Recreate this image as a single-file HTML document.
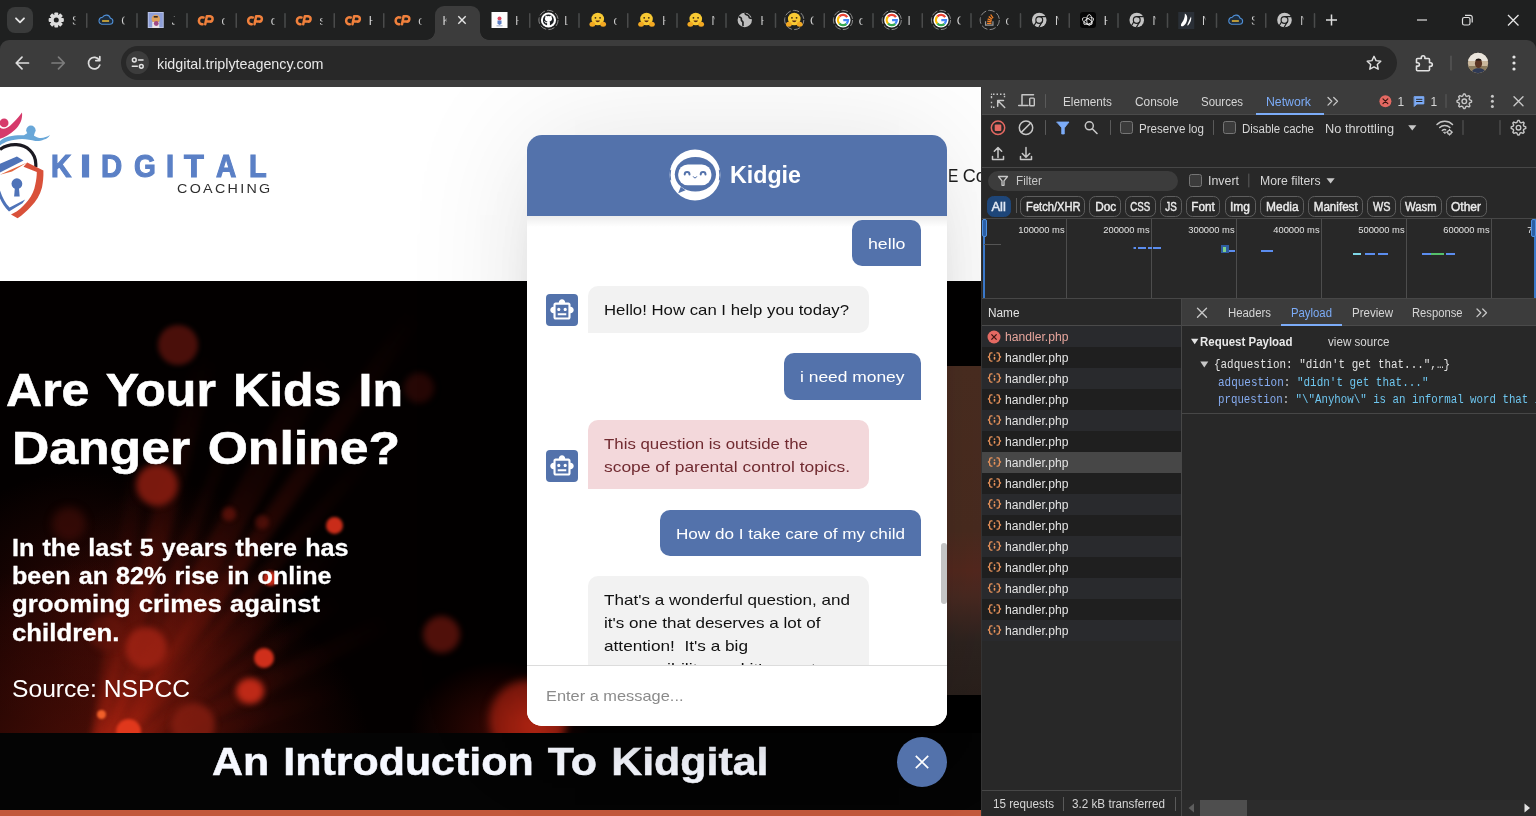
<!DOCTYPE html>
<html lang="en">
<head>
<meta charset="utf-8">
<title>kidgital.triplyteagency.com</title>
<style>
*{box-sizing:border-box;margin:0;padding:0}
html,body{width:1536px;height:816px;overflow:hidden;background:#1f2020;font-family:"Liberation Sans",sans-serif;}
.abs{position:absolute}
#root{position:relative;width:1536px;height:816px;overflow:hidden;background:#1f2020;opacity:.999}
/* ---------- browser chrome ---------- */
#tabstrip{left:0;top:0;width:1536px;height:40px;background:#1f2020}
#toolbar{left:0;top:40px;width:1536px;height:47px;background:#3c3c3c;border-radius:9px 9px 0 0}
#omni{left:121px;top:46px;width:1276px;height:34px;border-radius:17px;background:#282828}
#omni .chip{left:5.250px;top:5.250px;width:23px;height:23px;border-radius:12px;background:#3c3c3c}
#omni .url{left:36px;top:.5px;height:34px;line-height:34px;font-size:14.400px;color:#e8e8e8;white-space:nowrap;transform-origin:0 50%}
.tabsearch{left:7px;top:7px;width:26px;height:26px;border-radius:8px;background:#3a3b3b}
.tlet{top:13px;height:16px;line-height:16px;font-size:12px;color:#d8d8d8;width:3.800px;overflow:hidden;white-space:nowrap;-webkit-mask-image:linear-gradient(90deg,#000 35%,rgba(0,0,0,.15) 100%);mask-image:linear-gradient(90deg,#000 35%,rgba(0,0,0,.15) 100%)}
#acttab{left:435px;top:6px;width:45px;height:34px;background:#3c3c3c;border-radius:9px 9px 0 0}
#acttab:before,#acttab:after{content:"";position:absolute;bottom:0;width:9px;height:9px}
#acttab:before{left:-9px;background:radial-gradient(circle at 0 0,rgba(60,60,60,0) 8.5px,#3c3c3c 9.2px)}
#acttab:after{right:-9px;background:radial-gradient(circle at 100% 0,rgba(60,60,60,0) 8.5px,#3c3c3c 9.2px)}
/* ---------- page ---------- */
#page{left:0;top:87px;width:981px;height:729px;background:#fff;overflow:hidden}
#hdr{left:0;top:0;width:981px;height:194px;background:#fff}
#hero{left:0;top:194px;width:981px;height:452px;background:#050000;overflow:hidden}
#intro{left:0;top:646px;width:981px;height:77px;background:#040404}
#ostrip{left:0;top:723px;width:981px;height:6px;background:#c2583c}
.mont{font-family:"Liberation Sans",sans-serif;font-weight:700;color:#fff;white-space:nowrap;transform-origin:0 0}
.bk{border-radius:50%}
.wml{position:absolute;top:-.8px;-webkit-text-stroke:1.1px #5b80c6;font-size:31.100px;line-height:36px;font-weight:700;color:#5b80c6;transform-origin:0 0;white-space:nowrap}
/* ---------- chat ---------- */
#chat{left:526.600px;top:47.500px;width:420px;height:591.500px;border-radius:15px;background:#fff;overflow:hidden}
#chatshadow{left:526.600px;top:47.500px;width:420px;height:591.500px;border-radius:15px;box-shadow:0 0 128px 0 rgba(0,0,0,.1),0 32px 64px -48px rgba(0,0,0,.5)}
#chead{left:0;top:0;width:420px;height:81.700px;background:#5372ab}
.bub{font-size:15px;line-height:22.800px;padding:12px 16px;white-space:nowrap;overflow:hidden;font-family:"Liberation Sans",sans-serif}
.bub span{position:relative;top:1.100px;display:inline-block;transform-origin:0 50%;white-space:nowrap}
.out{background:#5372ab;color:#fff;border-radius:10px 10px 0 10px}
.in{background:#f2f2f2;color:#111;border-radius:10px 10px 10px 0}
.err{background:#f3d8db;color:#712b31;border-radius:10px 10px 10px 0}
.bot{width:32px;height:32px;border-radius:4px;background:#5372ab}
/* ---------- devtools ---------- */
#dt{left:982px;top:87px;width:554px;height:729px;background:#282828;color:#e3e3e3;font-size:12px;overflow:hidden;white-space:nowrap}
#dtsep{left:981px;top:87px;width:1px;height:729px;background:#333}
#dt .t{position:absolute;height:16px;line-height:16px;font-size:12px;color:#e3e3e3;white-space:nowrap}
#dt .vs{position:absolute;width:1px;background:#5a5a5a}
#dt .cb{position:absolute;width:13px;height:13px;border:1px solid #757575;border-radius:2.5px;background:#3b3b3b}
#dt .chipb{position:absolute;top:108px;height:21px;border:1px solid #5e5e5e;border-radius:6.5px;font-size:12px;line-height:20.500px;text-align:center;color:#ececec;font-weight:400;-webkit-text-stroke:.4px #ececec}
#dt .row{position:absolute;left:0;width:199px;height:21px}
#dt .row .t{left:23px;top:2.5px}
#dt .mono{font-family:"Liberation Mono",monospace;font-size:12px}
</style>
</head>
<body>
<div id="root">
<div id="tabstrip" class="abs"></div>
<div id="toolbar" class="abs"></div>
<div id="acttab" class="abs"></div>
<div class="abs tabsearch"></div>

<svg class="abs" style="left:0;top:0" width="1536" height="40" viewBox="0 0 1536 40">
<g transform="translate(56.25,20)"><g fill="#dcdcdc"><rect x="-1.9" y="-7.6" width="3.8" height="15.2" rx="0.8" transform="rotate(0)"/><rect x="-1.9" y="-7.6" width="3.8" height="15.2" rx="0.8" transform="rotate(45)"/><rect x="-1.9" y="-7.6" width="3.8" height="15.2" rx="0.8" transform="rotate(90)"/><rect x="-1.9" y="-7.6" width="3.8" height="15.2" rx="0.8" transform="rotate(135)"/><circle r="5.6"/></g><circle r="2.5" fill="#1f2020"/></g>
<g transform="translate(97.5,12)"><path d="M4.2 12.2h8.2a3 3 0 0 0 .5-5.95A4.3 4.3 0 0 0 5 5.3 3.5 3.5 0 0 0 4.2 12.2z" fill="#1d2c3c" stroke="#4f8fd6" stroke-width="1.1"/><rect x="4.6" y="8.2" width="7" height="1.6" fill="#e0b43a"/></g>
<g transform="translate(147.75,12)"><rect width="16" height="16" fill="#b9c3e6"/><rect x="1" y="1" width="14" height="14" fill="#8e9fd8"/><circle cx="8" cy="7" r="4.2" fill="#e1a25c"/><rect x="4.5" y="10" width="7" height="6" fill="#e9e3e8"/><circle cx="8.5" cy="11.5" r="2.4" fill="#a04a86"/><rect x="6" y="4" width="4" height="1.6" fill="#3a2a20"/></g>
<g transform="translate(197.55,12)" fill="none" stroke="#f0803c" stroke-width="2.5" stroke-linecap="round" stroke-linejoin="round"><path d="M6 5.400H5.200a3.400 3.400 0 0 0-.9 6.800H5"/><path d="M7.700 12.200 9.300 4.200h3.300a2.700 2.700 0 0 1-.5 5.400H9.900"/></g>
<g transform="translate(246.8,12)" fill="none" stroke="#f0803c" stroke-width="2.5" stroke-linecap="round" stroke-linejoin="round"><path d="M6 5.400H5.200a3.400 3.400 0 0 0-.9 6.800H5"/><path d="M7.700 12.200 9.300 4.200h3.300a2.700 2.700 0 0 1-.5 5.400H9.900"/></g>
<g transform="translate(295.55,12)" fill="none" stroke="#f0803c" stroke-width="2.5" stroke-linecap="round" stroke-linejoin="round"><path d="M6 5.400H5.200a3.400 3.400 0 0 0-.9 6.800H5"/><path d="M7.700 12.200 9.300 4.200h3.300a2.700 2.700 0 0 1-.5 5.400H9.900"/></g>
<g transform="translate(344.8,12)" fill="none" stroke="#f0803c" stroke-width="2.5" stroke-linecap="round" stroke-linejoin="round"><path d="M6 5.400H5.200a3.400 3.400 0 0 0-.9 6.800H5"/><path d="M7.700 12.200 9.300 4.200h3.300a2.700 2.700 0 0 1-.5 5.400H9.900"/></g>
<g transform="translate(394.3,12)" fill="none" stroke="#f0803c" stroke-width="2.5" stroke-linecap="round" stroke-linejoin="round"><path d="M6 5.400H5.200a3.400 3.400 0 0 0-.9 6.800H5"/><path d="M7.700 12.200 9.300 4.200h3.300a2.700 2.700 0 0 1-.5 5.400H9.900"/></g>
<g transform="translate(491.5,12)"><rect width="16" height="16" fill="#fdfdfd"/><circle cx="8" cy="6.5" r="2" fill="#d9485f"/><path d="M6 8.5h4v3.2l-2 1.3-2-1.3z" fill="#5b7fc4"/><rect x="5" y="13.4" width="6" height="0.9" fill="#9aa6c4"/></g>
<circle cx="548.5" cy="20" r="9.6" fill="none" stroke="#8a8a8a" stroke-width="1" stroke-dasharray="6.5 2.2"/><circle cx="548.5" cy="20" r="7.6" fill="#fff"/><g transform="translate(548.5,20)"><path d="M0-5.6a5.6 5.6 0 0 0-1.8 10.9c.3 0 .4-.1.4-.3v-1.9c-1.6.3-2-.7-2-.7-.3-.7-.7-.9-.7-.9-.5-.4 0-.4 0-.4.6 0 .9.6.9.6.5.9 1.400 .7 1.800 .5 0-.4.2-.7.4-.8-1.300 -.1-2.600 -.6-2.600 -2.800 0-.6.2-1.100 .6-1.500-.1-.1-.3-.7 0-1.500 0 0 .5-.2 1.600 .6a5.400 5.400 0 0 1 2.800 0c1.100-.8 1.600-.6 1.600-.6.3.8.1 1.400 0 1.500.4.400 .6.900 .6 1.500 0 2.200-1.300 2.700-2.600 2.800.2.200 .4.500 .4 1v2.500c0 .2.1.3.4.3A5.600 5.600 0 0 0 0-5.600z" fill="#1b1f23"/></g>
<g transform="translate(597.75,20)"><circle cx="0" cy="-1" r="6.3" fill="#f8c933"/><ellipse cx="-5.400" cy="4.2" rx="2.9" ry="2.500" fill="#f2a822"/><ellipse cx="5.400" cy="4.2" rx="2.9" ry="2.500" fill="#f2a822"/><circle cx="-2.300" cy="-2.200" r=".9" fill="#3a2b12"/><circle cx="2.300" cy="-2.200" r=".9" fill="#3a2b12"/><path d="M-2.300 .6a2.400 2.400 0 0 0 4.600 0z" fill="#5a2c16"/></g>
<g transform="translate(646.5,20)"><circle cx="0" cy="-1" r="6.3" fill="#f8c933"/><ellipse cx="-5.400" cy="4.2" rx="2.9" ry="2.500" fill="#f2a822"/><ellipse cx="5.400" cy="4.2" rx="2.9" ry="2.500" fill="#f2a822"/><circle cx="-2.300" cy="-2.200" r=".9" fill="#3a2b12"/><circle cx="2.300" cy="-2.200" r=".9" fill="#3a2b12"/><path d="M-2.300 .6a2.400 2.400 0 0 0 4.600 0z" fill="#5a2c16"/></g>
<g transform="translate(695.75,20)"><circle cx="0" cy="-1" r="6.3" fill="#f8c933"/><ellipse cx="-5.400" cy="4.2" rx="2.9" ry="2.500" fill="#f2a822"/><ellipse cx="5.400" cy="4.2" rx="2.9" ry="2.500" fill="#f2a822"/><circle cx="-2.300" cy="-2.200" r=".9" fill="#3a2b12"/><circle cx="2.300" cy="-2.200" r=".9" fill="#3a2b12"/><path d="M-2.300 .6a2.400 2.400 0 0 0 4.600 0z" fill="#5a2c16"/></g>
<g transform="translate(744.75,20)"><circle r="7.2" fill="#bdbdbd"/><path d="M-6-3.200c2 .2 3 1.400 2.600 2.800-.4 1.300 1.200 1.200 1.600 2.600.3 1.200-.6 2.600.4 3.800M0.500-7c-.5 1.600 1.600 1.800 2.900 2.400 1.400.700 .400 2.100 1.700 2.600 1 .4 1.700.2 2 .8" fill="none" stroke="#1f2020" stroke-width="1.700"/></g>
<circle cx="794.25" cy="20" r="9.6" fill="none" stroke="#8a8a8a" stroke-width="1" stroke-dasharray="6.5 2.2"/><g transform="translate(794.25,20)"><circle cx="0" cy="-1" r="6.3" fill="#f8c933"/><ellipse cx="-5.400" cy="4.2" rx="2.9" ry="2.500" fill="#f2a822"/><ellipse cx="5.400" cy="4.2" rx="2.9" ry="2.500" fill="#f2a822"/><circle cx="-2.300" cy="-2.200" r=".9" fill="#3a2b12"/><circle cx="2.300" cy="-2.200" r=".9" fill="#3a2b12"/><path d="M-2.300 .6a2.400 2.400 0 0 0 4.600 0z" fill="#5a2c16"/></g>
<circle cx="843.0" cy="20" r="9.6" fill="none" stroke="#8a8a8a" stroke-width="1" stroke-dasharray="6.5 2.2"/><circle cx="843.0" cy="20" r="7.6" fill="#fff"/><g transform="translate(843.0,20)" fill="none" stroke-width="2.300"><path d="M4.200-2.900A5 5 0 0 0-3.700-3.400" stroke="#ea4335"/><path d="M-3.700-3.400a5 5 0 0 0 0 6.800" stroke="#fbbc05"/><path d="M-3.700 3.400a5 5 0 0 0 7.200.400" stroke="#34a853"/><path d="M3.500 3.800A5 5 0 0 0 5 .1H.300" stroke="#4285f4"/></g>
<circle cx="891.75" cy="20" r="9.6" fill="none" stroke="#8a8a8a" stroke-width="1" stroke-dasharray="6.5 2.2"/><circle cx="891.75" cy="20" r="7.6" fill="#fff"/><g transform="translate(891.75,20)" fill="none" stroke-width="2.300"><path d="M4.200-2.900A5 5 0 0 0-3.700-3.400" stroke="#ea4335"/><path d="M-3.700-3.400a5 5 0 0 0 0 6.800" stroke="#fbbc05"/><path d="M-3.700 3.400a5 5 0 0 0 7.200.400" stroke="#34a853"/><path d="M3.500 3.800A5 5 0 0 0 5 .1H.300" stroke="#4285f4"/></g>
<circle cx="941.0" cy="20" r="9.6" fill="none" stroke="#8a8a8a" stroke-width="1" stroke-dasharray="6.5 2.2"/><circle cx="941.0" cy="20" r="7.6" fill="#fff"/><g transform="translate(941.0,20)" fill="none" stroke-width="2.300"><path d="M4.200-2.900A5 5 0 0 0-3.700-3.400" stroke="#ea4335"/><path d="M-3.700-3.400a5 5 0 0 0 0 6.800" stroke="#fbbc05"/><path d="M-3.700 3.400a5 5 0 0 0 7.200.400" stroke="#34a853"/><path d="M3.500 3.800A5 5 0 0 0 5 .1H.300" stroke="#4285f4"/></g>
<circle cx="989.75" cy="20" r="9.6" fill="none" stroke="#8a8a8a" stroke-width="1" stroke-dasharray="6.5 2.2"/><g transform="translate(989.75,20)"><path d="M-4.200 1.200v4h7.400v-4" fill="none" stroke="#9a9a9a" stroke-width="1.200"/><g stroke="#f48024" stroke-width="1.300"><path d="M-2.700 3.400h4.400"/><path d="M-2.600 1.200l4.300.700"/><path d="M-2.100-1.200l4 1.800"/><path d="M-1-3.600l3.300 2.900"/><path d="M.9-5.500l2.400 3.700"/></g></g>
<g transform="translate(1039.25,20)"><circle r="7.300" fill="#c4c4c4"/><circle r="3.400" fill="#c4c4c4" stroke="#1f2020" stroke-width="1.200"/><path d="M0-3.400h7M-2.900 1.700l-3.500 6M2.900 1.700l-3.300 5.700" stroke="#1f2020" stroke-width="1.200" fill="none"/></g>
<rect x="1080.0" y="12" width="16" height="16" rx="3" fill="#050505"/><g transform="translate(1088.0,20)" fill="none" stroke="#f2f2f2" stroke-width=".9"><ellipse rx="2.600" ry="5.400" transform="rotate(0) translate(1.300 0)"/><ellipse rx="2.600" ry="5.400" transform="rotate(60) translate(1.300 0)"/><ellipse rx="2.600" ry="5.400" transform="rotate(120) translate(1.300 0)"/></g>
<g transform="translate(1136.75,20)"><circle r="7.300" fill="#c4c4c4"/><circle r="3.400" fill="#c4c4c4" stroke="#1f2020" stroke-width="1.200"/><path d="M0-3.400h7M-2.900 1.700l-3.500 6M2.900 1.700l-3.300 5.700" stroke="#1f2020" stroke-width="1.200" fill="none"/></g>
<rect x="1178.25" y="12" width="16" height="17" fill="#2a2f36"/><g transform="translate(1186.25,20)" fill="#fff"><path d="M-1.400-6.500c2.600 1.400 3.300 5.600 1.200 9.400-1 1.800-3.200 3.900-4.600 3.400-1-.4-.4-2.300.6-3.700 1.700-2.500 3-5.300 2.800-9.100z"/><path d="M4.800-3.600c.8 2.600-.5 6.200-2.800 8.800-.500 .600-1.200.200-.9-.500 1.300-3 2.300-5.700 3.700-8.300z"/></g>
<g transform="translate(1227.25,12)"><path d="M4.2 12.2h8.2a3 3 0 0 0 .5-5.95A4.3 4.3 0 0 0 5 5.3 3.5 3.5 0 0 0 4.2 12.2z" fill="#1d2c3c" stroke="#4f8fd6" stroke-width="1.1"/><rect x="4.6" y="8.2" width="7" height="1.6" fill="#e0b43a"/></g>
<g transform="translate(1284.5,20)"><circle r="7.300" fill="#c4c4c4"/><circle r="3.400" fill="#c4c4c4" stroke="#1f2020" stroke-width="1.200"/><path d="M0-3.400h7M-2.900 1.700l-3.500 6M2.900 1.700l-3.300 5.700" stroke="#1f2020" stroke-width="1.200" fill="none"/></g>
<rect x="86.0" y="13" width="1.500" height="15" rx=".7" fill="#4a4b4b"/>
<rect x="136.25" y="13" width="1.500" height="15" rx=".7" fill="#4a4b4b"/>
<rect x="186.25" y="13" width="1.500" height="15" rx=".7" fill="#4a4b4b"/>
<rect x="235.5" y="13" width="1.500" height="15" rx=".7" fill="#4a4b4b"/>
<rect x="284.25" y="13" width="1.500" height="15" rx=".7" fill="#4a4b4b"/>
<rect x="333.5" y="13" width="1.500" height="15" rx=".7" fill="#4a4b4b"/>
<rect x="383.0" y="13" width="1.500" height="15" rx=".7" fill="#4a4b4b"/>
<rect x="529.0" y="13" width="1.500" height="15" rx=".7" fill="#4a4b4b"/>
<rect x="578.25" y="13" width="1.500" height="15" rx=".7" fill="#4a4b4b"/>
<rect x="627.0" y="13" width="1.500" height="15" rx=".7" fill="#4a4b4b"/>
<rect x="676.25" y="13" width="1.500" height="15" rx=".7" fill="#4a4b4b"/>
<rect x="725.25" y="13" width="1.500" height="15" rx=".7" fill="#4a4b4b"/>
<rect x="774.75" y="13" width="1.500" height="15" rx=".7" fill="#4a4b4b"/>
<rect x="823.5" y="13" width="1.500" height="15" rx=".7" fill="#4a4b4b"/>
<rect x="872.25" y="13" width="1.500" height="15" rx=".7" fill="#4a4b4b"/>
<rect x="921.5" y="13" width="1.500" height="15" rx=".7" fill="#4a4b4b"/>
<rect x="970.25" y="13" width="1.500" height="15" rx=".7" fill="#4a4b4b"/>
<rect x="1019.75" y="13" width="1.500" height="15" rx=".7" fill="#4a4b4b"/>
<rect x="1068.5" y="13" width="1.500" height="15" rx=".7" fill="#4a4b4b"/>
<rect x="1117.25" y="13" width="1.500" height="15" rx=".7" fill="#4a4b4b"/>
<rect x="1166.75" y="13" width="1.500" height="15" rx=".7" fill="#4a4b4b"/>
<rect x="1215.75" y="13" width="1.500" height="15" rx=".7" fill="#4a4b4b"/>
<rect x="1265.0" y="13" width="1.500" height="15" rx=".7" fill="#4a4b4b"/>
<rect x="1313.75" y="13" width="1.500" height="15" rx=".7" fill="#4a4b4b"/>
<path d="M458.300 16.300l7.400 7.400m0-7.400l-7.400 7.400" stroke="#e6e6e6" stroke-width="1.400" fill="none"/>
<path d="M1326 20h11M1331.500 14.500v11" stroke="#dedede" stroke-width="1.500" fill="none"/>
<path d="M1417 20h10" stroke="#e0e0e0" stroke-width="1.200"/>
<rect x="1462.500" y="17.500" width="7.500" height="7.500" rx="1.800" fill="none" stroke="#e0e0e0" stroke-width="1.200"/><path d="M1465 15.300h5.200a2 2 0 0 1 2 2v5.200" fill="none" stroke="#e0e0e0" stroke-width="1.200"/>
<path d="M1508 15l10.500 10.500m0-10.500L1508 25.500" stroke="#e6e6e6" stroke-width="1.300" fill="none"/>
<path d="M16 18.300l4 4 4-4" stroke="#e6e6e6" stroke-width="1.800" fill="none" stroke-linecap="round" stroke-linejoin="round"/>
</svg>
<div class="abs tlet" style="left:72.0px">S</div>
<div class="abs tlet" style="left:121.25px">C</div>
<div class="abs tlet" style="left:171.5px">J</div>
<div class="abs tlet" style="left:221.5px">c</div>
<div class="abs tlet" style="left:270.75px">c</div>
<div class="abs tlet" style="left:319.5px">s</div>
<div class="abs tlet" style="left:368.75px">H</div>
<div class="abs tlet" style="left:418.25px">c</div>
<div class="abs tlet" style="left:442.500px;width:4px">K</div>
<div class="abs tlet" style="left:515.25px">H</div>
<div class="abs tlet" style="left:564.25px">L</div>
<div class="abs tlet" style="left:613.5px">c</div>
<div class="abs tlet" style="left:662.25px">H</div>
<div class="abs tlet" style="left:711.5px">N</div>
<div class="abs tlet" style="left:760.5px">H</div>
<div class="abs tlet" style="left:810.0px">C</div>
<div class="abs tlet" style="left:858.75px">c</div>
<div class="abs tlet" style="left:907.5px">I</div>
<div class="abs tlet" style="left:956.75px">C</div>
<div class="abs tlet" style="left:1005.5px">c</div>
<div class="abs tlet" style="left:1055.0px">N</div>
<div class="abs tlet" style="left:1103.75px">H</div>
<div class="abs tlet" style="left:1152.5px">N</div>
<div class="abs tlet" style="left:1202.0px">N</div>
<div class="abs tlet" style="left:1251.0px">S</div>
<div class="abs tlet" style="left:1300.25px">N</div>
<div id="omni" class="abs"><div class="abs chip"></div><div class="abs url" id="url" style="transform:scaleX(0.9928)">kidgital.triplyteagency.com</div></div>
<svg class="abs" style="left:0;top:40px" width="1536" height="47" viewBox="0 40 1536 47" fill="none" stroke-linecap="round" stroke-linejoin="round">
<!-- back -->
<path d="M28.500 63H16.500M22 57.200 16.200 63l5.800 5.800" stroke="#dedede" stroke-width="1.700"/>
<!-- forward -->
<path d="M52 63h12M58.500 57.200 64.300 63l-5.800 5.800" stroke="#7d7d7d" stroke-width="1.700"/>
<!-- reload -->
<path d="M99.300 60.200A5.800 5.800 0 1 0 99.800 65" stroke="#dedede" stroke-width="1.700"/>
<path d="M99.800 56.600v4h-4" stroke="#dedede" stroke-width="1.700"/>
<!-- site info (tune) -->
<g stroke="#e3e3e3" stroke-width="1.500"><circle cx="134.300" cy="60" r="1.900"/><path d="M138.500 60h4.500"/><circle cx="141.300" cy="66.300" r="1.900"/><path d="M132.300 66.300h5"/></g>
<!-- star -->
<path d="M1374 56.300l2.050 4.350 4.750.6-3.500 3.250.9 4.700-4.200-2.350-4.200 2.350.9-4.700-3.500-3.250 4.750-.6z" stroke="#e0e0e0" stroke-width="1.400"/>
<!-- extensions puzzle -->
<path d="M1417.500 58.500h3.800v-1a1.800 1.800 0 0 1 3.600 0v1h3.600a1 1 0 0 1 1 1v3.200h1a1.800 1.800 0 0 1 0 3.600h-1v3.400a1 1 0 0 1-1 1h-11a1 1 0 0 1-1-1v-3.600h1.200a1.700 1.700 0 0 0 0-3.400h-1.200v-3.200a1 1 0 0 1 1-1z" stroke="#e3e3e3" stroke-width="1.600"/>
<path d="M1451 56v14" stroke="#5c5c5c" stroke-width="1.200"/>
<!-- avatar -->
<clipPath id="avc"><circle cx="1478" cy="63" r="10.200"/></clipPath>
<g clip-path="url(#avc)" stroke="none"><rect x="1467" y="52" width="22" height="22" fill="#c9b79c"/><rect x="1467" y="52" width="22" height="9" fill="#e9e4dc"/><rect x="1467" y="66" width="22" height="8" fill="#8a7a5c"/><ellipse cx="1478.500" cy="63.500" rx="3.600" ry="4.600" fill="#5a3524"/><path d="M1471.500 74c0-4.500 3-5.800 7-5.800s7 1.300 7 5.800z" fill="#2f3a55"/><path d="M1475.200 60.500a3.500 3 0 0 1 6.600 0z" fill="#1c1410"/></g>
<!-- menu dots -->
<g fill="#e3e3e3" stroke="none"><circle cx="1514" cy="57" r="1.600"/><circle cx="1514" cy="63" r="1.600"/><circle cx="1514" cy="69" r="1.600"/></g>
</svg>

<div id="page" class="abs">
  <div id="hdr" class="abs">
    <!-- logo icon (clipped at left edge) -->
    <svg class="abs" style="left:0;top:20px" width="56" height="120" viewBox="0 107 56 120">
      <path d="M0 127.500C3 130 7 128.500 10.300 125.600 13.500 122.500 18 118 22 112.400 22.800 119 20 125 14.700 130 10 134.500 4.500 137.500 0 138.800z" fill="#d63a6b"/>
      <circle cx="4.100" cy="122.900" r="4.400" fill="#d63a6b"/>
      <path d="M0 141C3 138.500 6 137.300 8.800 136.600 14 135.300 19 135 24 135.300L27.500 133h7l-.5 2.800C36 136.800 38 137.800 39.700 138 43.500 138.300 47 137 50 135.100 48.500 137.500 46.500 139 44 139.600 41 141 38 141.300 35.300 141 31 140.200 27 139.200 22 139.100 17 139.300 12.500 140 8.800 141 5.500 142 2.500 143.500 0 145.500z" fill="#69a7d8"/>
      <circle cx="30.900" cy="130.300" r="4.700" fill="#69a7d8"/>
      <path d="M0 149.600C4 146.300 10 144.400 16.500 144.700 27 145.200 35.600 153 35.800 164V167.200" fill="none" stroke="#1b1a22" stroke-width="3.200"/>
      <path d="M0 163.800 16.900 156.500 23.500 160.600 0 172.500z" fill="#4f73b8"/>
      <path d="M0 174.800 9 170.500 27.200 162.400 12 171.500z" fill="#e2673f"/>
      <path d="M27.200 162.400 43.400 170.400C43.600 177 43 182 42 187.400 40 195 36 201.500 31 206.500 27 211 22.500 215 17.600 218.200L11 214.600 17 211.200C21.500 208 25 204.500 28 200.600 32 195.500 34.300 190 35.300 184.400 36.300 180 36.800 176 36.800 172L23.500 166.800z" fill="#d9513a"/>
      <path d="M0 190.500C2.500 198 5.500 203.500 9.600 207.500L25.200 199.600 22.500 203.300 9 211.400C4.500 207 2 203 0 198.500z" fill="#4f73b8"/>
      <circle cx="16.900" cy="183.700" r="5.400" fill="#4f73b8"/><path d="M15 186.500h3.800l.9 10h-5.600z" fill="#4f73b8"/>
    </svg>
    <!-- wordmark -->
    <div class="abs" id="wm" style="left:0;top:62.500px;width:300px;height:36px"><span class="wml" id="wmK" style="left:50.55px;transform:scaleX(0.9066)">K</span><span class="wml" id="wmI1" style="left:80.22px;transform:scaleX(1.282)">I</span><span class="wml" id="wmD" style="left:101.45px;transform:scaleX(0.9439)">D</span><span class="wml" id="wmG" style="left:134.11px;transform:scaleX(0.9014)">G</span><span class="wml" id="wmI2" style="left:165.88px;transform:scaleX(0.9391)">I</span><span class="wml" id="wmT" style="left:184.46px;transform:scaleX(1.0439)">T</span><span class="wml" id="wmA" style="left:216.27px;transform:scaleX(0.9033)">A</span><span class="wml" id="wmL" style="left:249.02px;transform:scaleX(0.9303)">L</span></div>
    <div class="abs" id="coach" style="left:177.300px;top:94.200px;height:16px;line-height:16px;font-size:13.700px;color:#2e2e2e;letter-spacing:2.200px;white-space:nowrap;transform-origin:0 50%;transform:scaleX(1.0451)">COACHING</div>
    <div class="abs" style="left:948.200px;top:77.700px;font-size:18px;line-height:22px;color:#1e1e1e;white-space:nowrap;word-spacing:-2.500px"><span style="display:inline-block;transform-origin:0 50%;transform:scaleX(.86)">E</span> Co</div>
  </div>
  <div id="hero" class="abs">
    <div id="bokeh" class="abs" style="left:0;top:0;width:981px;height:452px;background:
radial-gradient(ellipse 270px 190px at 100px 470px,rgba(120,22,10,.62),rgba(95,16,8,.36) 55%,rgba(0,0,0,0) 100%),
radial-gradient(ellipse 120px 150px at 170px 350px,rgba(100,18,9,.4),rgba(0,0,0,0) 100%),
radial-gradient(ellipse 150px 130px at 80px 320px,rgba(85,14,8,.45),rgba(0,0,0,0) 100%),
radial-gradient(ellipse 90px 70px at 500px 450px,rgba(120,20,10,.45),rgba(0,0,0,0) 100%),
#030000">
<div class="abs" style="left:87.0px;top:160px;width:16px;height:330px;transform:rotate(8deg);transform-origin:50% 100%;background:linear-gradient(0deg,rgba(170,34,16,0.53),rgba(140,26,12,0.38) 35%,rgba(90,14,7,0.19) 70%,rgba(40,5,2,0));filter:blur(3.5px)"></div>
<div class="abs" style="left:84.0px;top:60px;width:22px;height:430px;transform:rotate(15deg);transform-origin:50% 100%;background:linear-gradient(0deg,rgba(170,34,16,0.57),rgba(140,26,12,0.42) 35%,rgba(90,14,7,0.21) 70%,rgba(40,5,2,0));filter:blur(3.5px)"></div>
<div class="abs" style="left:89.0px;top:110px;width:12px;height:380px;transform:rotate(22deg);transform-origin:50% 100%;background:linear-gradient(0deg,rgba(170,34,16,0.5),rgba(140,26,12,0.35) 35%,rgba(90,14,7,0.17) 70%,rgba(40,5,2,0));filter:blur(3.5px)"></div>
<div class="abs" style="left:82.0px;top:20px;width:26px;height:470px;transform:rotate(29deg);transform-origin:50% 100%;background:linear-gradient(0deg,rgba(170,34,16,0.55),rgba(140,26,12,0.4) 35%,rgba(90,14,7,0.20) 70%,rgba(40,5,2,0));filter:blur(3.5px)"></div>
<div class="abs" style="left:86.0px;top:-70px;width:18px;height:560px;transform:rotate(35deg);transform-origin:50% 100%;background:linear-gradient(0deg,rgba(170,34,16,0.53),rgba(140,26,12,0.38) 35%,rgba(90,14,7,0.19) 70%,rgba(40,5,2,0));filter:blur(3.5px)"></div>
<div class="abs" style="left:88.0px;top:70px;width:14px;height:420px;transform:rotate(41deg);transform-origin:50% 100%;background:linear-gradient(0deg,rgba(170,34,16,0.49),rgba(140,26,12,0.34) 35%,rgba(90,14,7,0.17) 70%,rgba(40,5,2,0));filter:blur(3.5px)"></div>
<div class="abs" style="left:84.0px;top:160px;width:22px;height:330px;transform:rotate(47deg);transform-origin:50% 100%;background:linear-gradient(0deg,rgba(170,34,16,0.51),rgba(140,26,12,0.36) 35%,rgba(90,14,7,0.18) 70%,rgba(40,5,2,0));filter:blur(3.5px)"></div>
<div class="abs" style="left:88.0px;top:190px;width:14px;height:300px;transform:rotate(55deg);transform-origin:50% 100%;background:linear-gradient(0deg,rgba(170,34,16,0.44999999999999996),rgba(140,26,12,0.3) 35%,rgba(90,14,7,0.15) 70%,rgba(40,5,2,0));filter:blur(3.5px)"></div>
<div class="abs" style="left:86.0px;top:160px;width:18px;height:330px;transform:rotate(63deg);transform-origin:50% 100%;background:linear-gradient(0deg,rgba(170,34,16,0.41000000000000003),rgba(140,26,12,0.26) 35%,rgba(90,14,7,0.13) 70%,rgba(40,5,2,0));filter:blur(3.5px)"></div>
<div class="abs" style="left:87.0px;top:230px;width:16px;height:260px;transform:rotate(72deg);transform-origin:50% 100%;background:linear-gradient(0deg,rgba(170,34,16,0.37),rgba(140,26,12,0.22) 35%,rgba(90,14,7,0.11) 70%,rgba(40,5,2,0));filter:blur(3.5px)"></div>
<div class="abs bk" style="left:158px;top:44px;width:40px;height:40px;background:rgba(82,17,11,.9);filter:blur(2.5px)"></div>
<div class="abs bk" style="left:404px;top:92px;width:30px;height:30px;background:rgba(48,9,6,.8);filter:blur(3px)"></div>
<div class="abs bk" style="left:136px;top:183px;width:42px;height:42px;background:rgba(135,28,16,.9);filter:blur(3px)"></div>
<div class="abs bk" style="left:326px;top:236px;width:17px;height:17px;background:#c92c19;filter:blur(1.5px)"></div>
<div class="abs bk" style="left:263px;top:290px;width:15px;height:15px;background:#c42a18;filter:blur(1.5px)"></div>
<div class="abs bk" style="left:423px;top:335px;width:37px;height:37px;background:rgba(95,20,13,.85);filter:blur(3px)"></div>
<div class="abs bk" style="left:254px;top:367px;width:20px;height:20px;background:#cf2f1b;filter:blur(1.5px)"></div>
<div class="abs bk" style="left:236px;top:397px;width:28px;height:26px;background:#be2917;filter:blur(3px)"></div>
<div class="abs bk" style="left:97px;top:429px;width:9px;height:9px;background:#f0602a;filter:blur(1px)"></div>
<div class="abs bk" style="left:116px;top:438px;width:25px;height:25px;background:#e0381c;filter:blur(1.500px)"></div>
<div class="abs bk" style="left:171px;top:422px;width:44px;height:44px;background:rgba(140,32,18,.72);filter:blur(3px)"></div>
<div class="abs bk" style="left:489px;top:399px;width:78px;height:78px;background:radial-gradient(circle at 60% 60%,rgba(200,42,22,.9),rgba(150,30,16,.8) 70%,rgba(120,24,12,.7));filter:blur(4px)"></div>
<div class="abs bk" style="left:125px;top:346px;width:42px;height:42px;background:rgba(165,36,20,.78);filter:blur(3px)"></div>
<div class="abs bk" style="left:52px;top:226px;width:34px;height:34px;background:rgba(100,20,12,.4);filter:blur(4px)"></div>
<div class="abs bk" style="left:222px;top:226px;width:14px;height:14px;background:rgba(120,24,14,.6);filter:blur(2px)"></div>
<div class="abs bk" style="left:255px;top:234px;width:14px;height:14px;background:rgba(120,24,14,.5);filter:blur(2px)"></div>
<div class="abs bk" style="left:89px;top:334px;width:36px;height:36px;background:rgba(105,21,12,.6);filter:blur(3px)"></div>
</div>
    <div class="abs" style="left:946px;top:85px;width:35px;height:329px;background:linear-gradient(180deg,#4b2e22 0%,#4a2c20 50%,#55291f 62%,#4a2a22 70%,#2e2420 84%,#2a201c 100%)"></div>
    <div class="abs" style="left:946px;top:414px;width:35px;height:38px;background:#000"></div>
    <div class="abs mont" id="h1a" style="word-spacing:3px;-webkit-text-stroke:.6px #fff;left:6px;top:80.300px;font-size:47px;transform:scaleX(1.0647);line-height:57.500px">Are Your Kids In</div>
    <div class="abs mont" id="h1b" style="word-spacing:3px;-webkit-text-stroke:.6px #fff;left:12px;top:137.600px;font-size:47px;transform:scaleX(1.0993);line-height:57.500px">Danger Online?</div>
    <div class="abs mont" id="s1" style="word-spacing:1px;-webkit-text-stroke:.3px #fff;left:12px;top:253px;font-size:23.5px;transform:scaleX(1.0708);line-height:28.200px">In the last 5 years there has</div>
    <div class="abs mont" id="s2" style="word-spacing:1px;-webkit-text-stroke:.3px #fff;left:12px;top:281.200px;font-size:23.5px;transform:scaleX(1.0691);line-height:28.200px">been an 82% rise in online</div>
    <div class="abs mont" id="s3" style="word-spacing:1px;-webkit-text-stroke:.3px #fff;left:12px;top:309.400px;font-size:23.5px;transform:scaleX(1.0943);line-height:28.200px">grooming crimes against</div>
    <div class="abs mont" id="s4" style="word-spacing:1px;-webkit-text-stroke:.3px #fff;left:12px;top:337.600px;font-size:23.5px;transform:scaleX(1.0976);line-height:28.200px">children.</div>
    <div class="abs mont" id="src" style="left:12px;top:394px;font-size:23.5px;transform:scaleX(1.0484);line-height:28px;font-weight:400">Source: NSPCC</div>
  </div>
  <div id="intro" class="abs">
    <div class="abs mont" id="introt" style="word-spacing:2px;-webkit-text-stroke:.5px #f6f8ff;left:212px;top:6px;font-size:39px;transform:scaleX(1.1005);line-height:46px;color:#f6f8ff">An Introduction To Kidgital</div>
  </div>
  <div id="ostrip" class="abs"></div>
</div>

<div class="abs" style="left:0;top:87px;width:981px;height:729px;overflow:hidden;pointer-events:none">
<div id="chatshadow" class="abs"></div>
<div id="chat" class="abs">
  <div id="chead" class="abs">
    <svg class="abs" style="left:139.700px;top:11.500px" width="58" height="58" viewBox="-29 -29 58 58">
      <circle cx="0" cy="0" r="25.400" fill="#fff"/>
      <path d="M-24.300-5.200a24.800 24.800 0 0 0 0 10.600M24.300-5.200a24.800 24.800 0 0 1 0 10.600" stroke="#5372ab" stroke-width="1" fill="none"/>
      <ellipse cx="0.400" cy="-.7" rx="20.600" ry="17.300" fill="#5372ab"/>
      <path d="M-14.200 11.800l-2.600 6.400 7.400-3z" fill="#5372ab"/>
      <rect x="-16.800" y="-10.500" width="33.200" height="20.800" rx="9.600" fill="#fff"/>
      <path d="M-10.300-.6a2.400 2.400 0 0 1 4.800 0M5.700-.6a2.400 2.400 0 0 1 4.800 0" stroke="#5372ab" stroke-width="2" fill="none" stroke-linecap="round"/>
      <path d="M-1.700 1.700a1.800 1.800 0 0 0 3.400 0" stroke="#5372ab" stroke-width="1" fill="none" stroke-linecap="round"/>
    </svg>
    <div class="abs" id="kidgie" style="left:203.800px;top:26.700px;height:28px;line-height:28px;font-size:23.300px;font-weight:700;color:#fff;white-space:nowrap;transform-origin:0 50%;transform:scaleX(0.9974)">Kidgie</div>
  </div>
  <!-- subtle header shadow -->
  <div class="abs" style="left:0;top:81.700px;width:420px;height:11px;background:linear-gradient(180deg,rgba(0,0,0,.075),rgba(0,0,0,0))"></div>

  <div class="abs bub out" style="left:325px;top:85px;width:69px;height:46.800px"><span id="c1" style="transform:scaleX(1.1828)">hello</span></div>

  <div class="abs bot" style="left:19.200px;top:159.100px"><svg width="32" height="32" viewBox="-3 -3 30 30"><path fill="#fff" d="M20 9V7c0-1.100-.9-2-2-2h-3c0-1.660-1.340-3-3-3S9 3.340 9 5H6c-1.100 0-2 .9-2 2v2c-1.660 0-3 1.340-3 3s1.340 3 3 3v4c0 1.100.9 2 2 2h12c1.100 0 2-.9 2-2v-4c1.660 0 3-1.340 3-3s-1.340-3-3-3zm-2 10H6V7h12v12zm-9-6c-.830 0-1.500-.670-1.500-1.500S8.170 10 9 10s1.500.670 1.500 1.500S9.830 13 9 13zm7.500-1.500c0 .830-.670 1.500-1.500 1.500s-1.500-.670-1.500-1.500.670-1.500 1.500-1.500 1.500.670 1.500 1.500zM8 15h8v2H8v-2z"/></svg></div>
  <div class="abs bub in" style="left:61.500px;top:151.600px;width:280.500px;height:46.800px"><span id="c2" style="transform:scaleX(1.1172)">Hello! How can I help you today?</span></div>

  <div class="abs bub out" style="left:257.700px;top:218.400px;width:136.300px;height:46.800px"><span id="c3" style="transform:scaleX(1.1603)">i need money</span></div>

  <div class="abs bot" style="left:19.200px;top:315.700px"><svg width="32" height="32" viewBox="-3 -3 30 30"><path fill="#fff" d="M20 9V7c0-1.100-.9-2-2-2h-3c0-1.660-1.340-3-3-3S9 3.340 9 5H6c-1.100 0-2 .9-2 2v2c-1.660 0-3 1.340-3 3s1.340 3 3 3v4c0 1.100.9 2 2 2h12c1.100 0 2-.9 2-2v-4c1.660 0 3-1.340 3-3s-1.340-3-3-3zm-2 10H6V7h12v12zm-9-6c-.830 0-1.500-.670-1.500-1.500S8.170 10 9 10s1.500.670 1.500 1.500S9.830 13 9 13zm7.500-1.500c0 .830-.670 1.500-1.500 1.500s-1.500-.670-1.500-1.500.670-1.500 1.500-1.500 1.500.670 1.500 1.500zM8 15h8v2H8v-2z"/></svg></div>
  <div class="abs bub err" style="left:61.500px;top:285.200px;width:280.500px;height:69.600px"><span id="c4" style="transform:scaleX(1.1222)">This question is outside the</span><br><span id="c5" style="transform:scaleX(1.1615)">scope of parental control topics.</span></div>

  <div class="abs bub out" style="left:133.300px;top:375px;width:260.700px;height:46.800px"><span id="c6" style="transform:scaleX(1.1397)">How do I take care of my child</span></div>

  <div class="abs bub in" style="left:61.500px;top:441.800px;width:280.500px;height:140px"><span id="c7" style="transform:scaleX(1.1371)">That's a wonderful question, and</span><br><span id="c8" style="transform:scaleX(1.1366)">it's one that deserves a lot of</span><br><span id="c9" style="transform:scaleX(1.1478)">attention!&nbsp; It's a big</span><br><span id="c10" style="transform:scaleX(1.1821)">responsibility, and it's great</span></div>

  <!-- scrollbar -->
  <div class="abs" style="left:414px;top:408.500px;width:6px;height:60.500px;background:#c4c4c4;border-radius:25px"></div>
  <!-- input -->
  <div class="abs" style="left:0;top:530.300px;width:420px;height:61.500px;background:#fff;border-top:1px solid #dcdcdc"></div>
  <div class="abs" id="ph" style="left:19.500px;top:549.300px;height:23px;line-height:23px;font-size:15px;color:#8b8b8b;white-space:nowrap;transform-origin:0 50%;transform:scaleX(1.0921)">Enter a message...</div>
</div>
<!-- toggler -->
<div class="abs" style="left:896.500px;top:649.500px;width:50px;height:50px;border-radius:50%;background:#5372ab"></div>
<svg class="abs" style="left:909.500px;top:662.500px" width="24" height="24" viewBox="0 0 24 24"><path d="M5.800 5.800 18.200 18.200M18.200 5.800 5.800 18.200" stroke="#fff" stroke-width="1.700" fill="none"/></svg>
</div>

<div id="dtsep" class="abs"></div>
<div id="dt" class="abs">
<div class="abs" style="left:0;top:0;width:554px;height:27px;background:#3c3c3c"></div>
<div class="abs" style="left:0;top:27px;width:554px;height:1px;background:#4a4a4a"></div>
<div class="t" id="d_el" style="left:80.5px;top:6.7px;color:#d6d6d6;transform-origin:0 50%;transform:scaleX(0.9794);">Elements</div>
<div class="t" id="d_co" style="left:153px;top:6.7px;color:#d6d6d6;transform-origin:0 50%;transform:scaleX(0.9879);">Console</div>
<div class="t" id="d_so" style="left:218.5px;top:6.7px;color:#d6d6d6;transform-origin:0 50%;transform:scaleX(0.9539);">Sources</div>
<div class="t" id="d_ne" style="left:284px;top:6.7px;color:#7cacf8;transform-origin:0 50%;transform:scaleX(1.0224);">Network</div>
<div class="abs" style="left:274px;top:26px;width:68px;height:2px;background:#7cacf8"></div>
<div class="t" id="d_e1" style="left:415.5px;top:7.2px;color:#d6d6d6;transform-origin:0 50%;transform:scaleX(1);">1</div>
<div class="t" id="d_m1" style="left:448.5px;top:7.2px;color:#d6d6d6;transform-origin:0 50%;transform:scaleX(1);">1</div>
<div class="t" id="d_pl" style="left:156.5px;top:33.6px;color:#d6d6d6;transform-origin:0 50%;transform:scaleX(0.9647);">Preserve log</div>
<div class="t" id="d_dc" style="left:259.5px;top:33.6px;color:#d6d6d6;transform-origin:0 50%;transform:scaleX(0.9552);">Disable cache</div>
<div class="t" id="d_nt" style="left:342.5px;top:33.6px;color:#d6d6d6;transform-origin:0 50%;transform:scaleX(1.0664);">No throttling</div>
<div class="abs" style="left:0;top:80px;width:554px;height:1px;background:#474747"></div>
<div class="abs" style="left:5.5px;top:84px;width:190px;height:20px;border-radius:10px;background:#3c3c3c"></div>
<div class="t" id="d_fi" style="left:33.5px;top:86.4px;color:#c7c7c7;transform-origin:0 50%;transform:scaleX(0.9748);">Filter</div>
<div class="t" id="d_in" style="left:225.5px;top:86.4px;color:#d6d6d6;transform-origin:0 50%;transform:scaleX(1.0328);">Invert</div>
<div class="t" id="d_mf" style="left:277.6px;top:86.4px;color:#d6d6d6;transform-origin:0 50%;transform:scaleX(1.0195);">More filters</div>
<div class="cb" style="left:137.5px;top:34.1px"></div>
<div class="cb" style="left:241.0px;top:34.1px"></div>
<div class="cb" style="left:207.0px;top:87.0px"></div>
<div class="chipb" style="left:4.6px;width:24.4px;top:108.5px;background:#1e4679;border-color:#1e4679;color:#d7e6ff;"><span id="ch0" style="display:inline-block;transform:scaleX(1.0867)">All</span></div>
<div class="chipb" style="left:38.3px;width:65.1px;top:108.5px;"><span id="ch1" style="display:inline-block;transform:scaleX(0.9286)">Fetch/XHR</span></div>
<div class="chipb" style="left:107.4px;width:31.6px;top:108.5px;"><span id="ch2" style="display:inline-block;transform:scaleX(0.9839)">Doc</span></div>
<div class="chipb" style="left:143px;width:30.5px;top:108.5px;"><span id="ch3" style="display:inline-block;transform:scaleX(0.8101)">CSS</span></div>
<div class="chipb" style="left:178px;width:22px;top:108.5px;"><span id="ch4" style="display:inline-block;transform:scaleX(0.8205)">JS</span></div>
<div class="chipb" style="left:204px;width:34px;top:108.5px;"><span id="ch5" style="display:inline-block;transform:scaleX(0.9785)">Font</span></div>
<div class="chipb" style="left:242.8px;width:31.2px;top:108.5px;"><span id="ch6" style="display:inline-block;transform:scaleX(0.9992)">Img</span></div>
<div class="chipb" style="left:278px;width:43.8px;top:108.5px;"><span id="ch7" style="display:inline-block;transform:scaleX(0.9943)">Media</span></div>
<div class="chipb" style="left:326px;width:55px;top:108.5px;"><span id="ch8" style="display:inline-block;transform:scaleX(0.97)">Manifest</span></div>
<div class="chipb" style="left:385.2px;width:28.6px;top:108.5px;"><span id="ch9" style="display:inline-block;transform:scaleX(0.9047)">WS</span></div>
<div class="chipb" style="left:418px;width:42.3px;top:108.5px;"><span id="ch10" style="display:inline-block;transform:scaleX(0.9385)">Wasm</span></div>
<div class="chipb" style="left:464px;width:41px;top:108.5px;"><span id="ch11" style="display:inline-block;transform:scaleX(0.9995)">Other</span></div>
<div class="vs" style="left:33.5px;top:111px;height:15px"></div>
<div class="abs" style="left:0;top:130.5px;width:554px;height:1px;background:#474747"></div>
<div class="vs" style="left:84.0px;top:131.5px;height:80px;background:#4d4d4d"></div>
<div class="t" style="left:20.6px;width:62px;text-align:right;top:134.8px;font-size:9.400px;color:#e3e3e3">100000 ms</div>
<div class="vs" style="left:169.0px;top:131.5px;height:80px;background:#4d4d4d"></div>
<div class="t" style="left:105.6px;width:62px;text-align:right;top:134.8px;font-size:9.400px;color:#e3e3e3">200000 ms</div>
<div class="vs" style="left:254.0px;top:131.5px;height:80px;background:#4d4d4d"></div>
<div class="t" style="left:190.6px;width:62px;text-align:right;top:134.8px;font-size:9.400px;color:#e3e3e3">300000 ms</div>
<div class="vs" style="left:339.0px;top:131.5px;height:80px;background:#4d4d4d"></div>
<div class="t" style="left:275.6px;width:62px;text-align:right;top:134.8px;font-size:9.400px;color:#e3e3e3">400000 ms</div>
<div class="vs" style="left:424.0px;top:131.5px;height:80px;background:#4d4d4d"></div>
<div class="t" style="left:360.6px;width:62px;text-align:right;top:134.8px;font-size:9.400px;color:#e3e3e3">500000 ms</div>
<div class="vs" style="left:509.0px;top:131.5px;height:80px;background:#4d4d4d"></div>
<div class="t" style="left:445.6px;width:62px;text-align:right;top:134.8px;font-size:9.400px;color:#e3e3e3">600000 ms</div>
<div class="t" style="left:545.2px;top:134.8px;font-size:9.400px">7</div>
<div class="abs" style="left:1px;top:131.5px;width:1.5px;height:80px;background:#3a78c9"></div>
<div class="abs" style="left:0px;top:132px;width:5px;height:18px;border-radius:2px;background:#2b5fa5;border:1px solid #4d8fe0"></div>
<div class="abs" style="left:552px;top:131.5px;width:2px;height:80px;background:#3a78c9"></div>
<div class="abs" style="left:549.3px;top:132px;width:5px;height:18px;border-radius:2px;background:#2b5fa5;border:1px solid #4d8fe0"></div>
<div class="abs" style="left:2px;top:157px;width:16.5px;height:1px;background:#555"></div>
<div class="abs" style="left:152px;top:159.7px;width:2px;height:2px;background:#5b8def"></div>
<div class="abs" style="left:156px;top:159.7px;width:8px;height:2px;background:#5b8def"></div>
<div class="abs" style="left:166px;top:159.7px;width:4px;height:2px;background:#5b8def"></div>
<div class="abs" style="left:171px;top:159.7px;width:8px;height:2px;background:#5b8def"></div>
<div class="abs" style="left:150.5px;top:159.7px;width:1.5px;height:2px;background:#3d5a8a"></div>
<div class="abs" style="left:239px;top:158px;width:7.7px;height:8px;background:#2f5da0"></div>
<div class="abs" style="left:241px;top:159.5px;width:3px;height:5px;background:#7fd08a"></div>
<div class="abs" style="left:246.7px;top:162.5px;width:6.3px;height:2px;background:#5b8def"></div>
<div class="abs" style="left:278.5px;top:162.7px;width:12.0px;height:2px;background:#5b8def"></div>
<div class="abs" style="left:370.8px;top:165.7px;width:8.2px;height:2px;background:#7fd8e8"></div>
<div class="abs" style="left:383px;top:165.7px;width:9.6px;height:2px;background:#5b8def"></div>
<div class="abs" style="left:396px;top:165.7px;width:9.6px;height:2px;background:#5b8def"></div>
<div class="abs" style="left:439.5px;top:165.7px;width:9.5px;height:2px;background:#5b8def"></div>
<div class="abs" style="left:449px;top:165.7px;width:13px;height:2px;background:#55c06a"></div>
<div class="abs" style="left:464px;top:165.7px;width:9px;height:2px;background:#5b8def"></div>
<div class="abs" style="left:0;top:211px;width:554px;height:1px;background:#474747"></div>
<div class="t" id="d_na" style="left:5.5px;top:217.8px;color:#e3e3e3;transform-origin:0 50%;transform:scaleX(0.9839);">Name</div>
<div class="abs" style="left:0;top:238px;width:199px;height:1px;background:#4a4a4a"></div>
<div class="row" style="top:239px;background:#292a2d"><svg class="abs" style="left:5px;top:3.500px" width="14" height="14" viewBox="-7 -7 14 14"><circle r="6.500" fill="#e46962"/><path d="M-2.600-2.600 2.600 2.600M2.600-2.600-2.600 2.600" stroke="#3a1512" stroke-width="1.300"/></svg><div class="t" id="r0" style="color:#e6a59c;transform-origin:0 50%;transform:scaleX(1.0122)">handler.php</div></div>
<div class="row" style="top:260px;background:#1f1f1f"><svg class="abs" style="left:4.500px;top:3px" width="15" height="14" viewBox="-8 -7.500 16 15" fill="none" stroke="#e9935a" stroke-width="1.550" stroke-linecap="round" stroke-linejoin="round"><g transform="scale(.95,.82)"><path d="M-2.800-5.300h-1a1.600 1.600 0 0 0-1.600 1.600v1.500c0 1.100-.7 1.700-1.500 2.200.8.500 1.500 1.100 1.500 2.200v1.500a1.600 1.600 0 0 0 1.600 1.600h1"/><path d="M2.800-5.300h1a1.600 1.600 0 0 1 1.600 1.600v1.500c0 1.100.7 1.700 1.500 2.200-.8.500-1.500 1.100-1.500 2.200v1.500a1.600 1.600 0 0 1-1.600 1.600h-1"/><path d="M0-2.600v.2M0 .5v2.200" stroke-width="1.900"/></g></svg><div class="t" id="r1" style="color:#e3e3e3;transform-origin:0 50%;transform:scaleX(1.0122)">handler.php</div></div>
<div class="row" style="top:281px;background:#292a2d"><svg class="abs" style="left:4.500px;top:3px" width="15" height="14" viewBox="-8 -7.500 16 15" fill="none" stroke="#e9935a" stroke-width="1.550" stroke-linecap="round" stroke-linejoin="round"><g transform="scale(.95,.82)"><path d="M-2.800-5.300h-1a1.600 1.600 0 0 0-1.600 1.600v1.500c0 1.100-.7 1.700-1.500 2.200.8.500 1.500 1.100 1.500 2.200v1.500a1.600 1.600 0 0 0 1.600 1.600h1"/><path d="M2.800-5.300h1a1.600 1.600 0 0 1 1.600 1.600v1.500c0 1.100.7 1.700 1.500 2.200-.8.500-1.500 1.100-1.500 2.200v1.500a1.600 1.600 0 0 1-1.600 1.600h-1"/><path d="M0-2.600v.2M0 .5v2.200" stroke-width="1.900"/></g></svg><div class="t" id="r2" style="color:#e3e3e3;transform-origin:0 50%;transform:scaleX(1.0122)">handler.php</div></div>
<div class="row" style="top:302px;background:#1f1f1f"><svg class="abs" style="left:4.500px;top:3px" width="15" height="14" viewBox="-8 -7.500 16 15" fill="none" stroke="#e9935a" stroke-width="1.550" stroke-linecap="round" stroke-linejoin="round"><g transform="scale(.95,.82)"><path d="M-2.800-5.300h-1a1.600 1.600 0 0 0-1.600 1.600v1.500c0 1.100-.7 1.700-1.500 2.200.8.500 1.500 1.100 1.500 2.200v1.500a1.600 1.600 0 0 0 1.600 1.600h1"/><path d="M2.800-5.300h1a1.600 1.600 0 0 1 1.600 1.600v1.500c0 1.100.7 1.700 1.500 2.200-.8.500-1.500 1.100-1.500 2.200v1.500a1.600 1.600 0 0 1-1.600 1.600h-1"/><path d="M0-2.600v.2M0 .5v2.200" stroke-width="1.900"/></g></svg><div class="t" id="r3" style="color:#e3e3e3;transform-origin:0 50%;transform:scaleX(1.0122)">handler.php</div></div>
<div class="row" style="top:323px;background:#292a2d"><svg class="abs" style="left:4.500px;top:3px" width="15" height="14" viewBox="-8 -7.500 16 15" fill="none" stroke="#e9935a" stroke-width="1.550" stroke-linecap="round" stroke-linejoin="round"><g transform="scale(.95,.82)"><path d="M-2.800-5.300h-1a1.600 1.600 0 0 0-1.600 1.600v1.500c0 1.100-.7 1.700-1.500 2.200.8.500 1.500 1.100 1.500 2.200v1.500a1.600 1.600 0 0 0 1.600 1.600h1"/><path d="M2.800-5.300h1a1.600 1.600 0 0 1 1.600 1.600v1.500c0 1.100.7 1.700 1.500 2.200-.8.500-1.500 1.100-1.500 2.200v1.500a1.600 1.600 0 0 1-1.600 1.600h-1"/><path d="M0-2.600v.2M0 .5v2.200" stroke-width="1.900"/></g></svg><div class="t" id="r4" style="color:#e3e3e3;transform-origin:0 50%;transform:scaleX(1.0122)">handler.php</div></div>
<div class="row" style="top:344px;background:#1f1f1f"><svg class="abs" style="left:4.500px;top:3px" width="15" height="14" viewBox="-8 -7.500 16 15" fill="none" stroke="#e9935a" stroke-width="1.550" stroke-linecap="round" stroke-linejoin="round"><g transform="scale(.95,.82)"><path d="M-2.800-5.300h-1a1.600 1.600 0 0 0-1.600 1.600v1.500c0 1.100-.7 1.700-1.500 2.200.8.500 1.500 1.100 1.500 2.200v1.500a1.600 1.600 0 0 0 1.600 1.600h1"/><path d="M2.800-5.300h1a1.600 1.600 0 0 1 1.600 1.600v1.500c0 1.100.7 1.700 1.500 2.200-.8.500-1.500 1.100-1.500 2.200v1.500a1.600 1.600 0 0 1-1.600 1.600h-1"/><path d="M0-2.600v.2M0 .5v2.200" stroke-width="1.900"/></g></svg><div class="t" id="r5" style="color:#e3e3e3;transform-origin:0 50%;transform:scaleX(1.0122)">handler.php</div></div>
<div class="row" style="top:365px;background:#474747"><svg class="abs" style="left:4.500px;top:3px" width="15" height="14" viewBox="-8 -7.500 16 15" fill="none" stroke="#e9935a" stroke-width="1.550" stroke-linecap="round" stroke-linejoin="round"><g transform="scale(.95,.82)"><path d="M-2.800-5.300h-1a1.600 1.600 0 0 0-1.600 1.600v1.500c0 1.100-.7 1.700-1.500 2.200.8.500 1.500 1.100 1.500 2.200v1.500a1.600 1.600 0 0 0 1.600 1.600h1"/><path d="M2.800-5.300h1a1.600 1.600 0 0 1 1.600 1.600v1.500c0 1.100.7 1.700 1.500 2.200-.8.500-1.500 1.100-1.500 2.200v1.500a1.600 1.600 0 0 1-1.600 1.600h-1"/><path d="M0-2.600v.2M0 .5v2.200" stroke-width="1.900"/></g></svg><div class="t" id="r6" style="color:#e3e3e3;transform-origin:0 50%;transform:scaleX(1.0122)">handler.php</div></div>
<div class="row" style="top:386px;background:#1f1f1f"><svg class="abs" style="left:4.500px;top:3px" width="15" height="14" viewBox="-8 -7.500 16 15" fill="none" stroke="#e9935a" stroke-width="1.550" stroke-linecap="round" stroke-linejoin="round"><g transform="scale(.95,.82)"><path d="M-2.800-5.300h-1a1.600 1.600 0 0 0-1.600 1.600v1.500c0 1.100-.7 1.700-1.500 2.200.8.500 1.500 1.100 1.500 2.200v1.500a1.600 1.600 0 0 0 1.600 1.600h1"/><path d="M2.800-5.300h1a1.600 1.600 0 0 1 1.600 1.600v1.500c0 1.100.7 1.700 1.500 2.200-.8.500-1.500 1.100-1.500 2.200v1.500a1.600 1.600 0 0 1-1.600 1.600h-1"/><path d="M0-2.600v.2M0 .5v2.200" stroke-width="1.900"/></g></svg><div class="t" id="r7" style="color:#e3e3e3;transform-origin:0 50%;transform:scaleX(1.0122)">handler.php</div></div>
<div class="row" style="top:407px;background:#292a2d"><svg class="abs" style="left:4.500px;top:3px" width="15" height="14" viewBox="-8 -7.500 16 15" fill="none" stroke="#e9935a" stroke-width="1.550" stroke-linecap="round" stroke-linejoin="round"><g transform="scale(.95,.82)"><path d="M-2.800-5.300h-1a1.600 1.600 0 0 0-1.600 1.600v1.500c0 1.100-.7 1.700-1.500 2.200.8.500 1.500 1.100 1.500 2.200v1.500a1.600 1.600 0 0 0 1.600 1.600h1"/><path d="M2.800-5.300h1a1.600 1.600 0 0 1 1.600 1.600v1.500c0 1.100.7 1.700 1.500 2.200-.8.500-1.500 1.100-1.500 2.200v1.500a1.600 1.600 0 0 1-1.600 1.600h-1"/><path d="M0-2.600v.2M0 .5v2.200" stroke-width="1.900"/></g></svg><div class="t" id="r8" style="color:#e3e3e3;transform-origin:0 50%;transform:scaleX(1.0122)">handler.php</div></div>
<div class="row" style="top:428px;background:#1f1f1f"><svg class="abs" style="left:4.500px;top:3px" width="15" height="14" viewBox="-8 -7.500 16 15" fill="none" stroke="#e9935a" stroke-width="1.550" stroke-linecap="round" stroke-linejoin="round"><g transform="scale(.95,.82)"><path d="M-2.800-5.300h-1a1.600 1.600 0 0 0-1.600 1.600v1.500c0 1.100-.7 1.700-1.500 2.200.8.500 1.500 1.100 1.500 2.200v1.500a1.600 1.600 0 0 0 1.600 1.600h1"/><path d="M2.800-5.300h1a1.600 1.600 0 0 1 1.600 1.600v1.500c0 1.100.7 1.700 1.500 2.200-.8.500-1.500 1.100-1.500 2.200v1.500a1.600 1.600 0 0 1-1.600 1.600h-1"/><path d="M0-2.600v.2M0 .5v2.200" stroke-width="1.900"/></g></svg><div class="t" id="r9" style="color:#e3e3e3;transform-origin:0 50%;transform:scaleX(1.0122)">handler.php</div></div>
<div class="row" style="top:449px;background:#292a2d"><svg class="abs" style="left:4.500px;top:3px" width="15" height="14" viewBox="-8 -7.500 16 15" fill="none" stroke="#e9935a" stroke-width="1.550" stroke-linecap="round" stroke-linejoin="round"><g transform="scale(.95,.82)"><path d="M-2.800-5.300h-1a1.600 1.600 0 0 0-1.600 1.600v1.500c0 1.100-.7 1.700-1.500 2.200.8.500 1.500 1.100 1.500 2.200v1.500a1.600 1.600 0 0 0 1.600 1.600h1"/><path d="M2.800-5.300h1a1.600 1.600 0 0 1 1.600 1.600v1.500c0 1.100.7 1.700 1.500 2.200-.8.500-1.500 1.100-1.500 2.200v1.500a1.600 1.600 0 0 1-1.600 1.600h-1"/><path d="M0-2.600v.2M0 .5v2.200" stroke-width="1.900"/></g></svg><div class="t" id="r10" style="color:#e3e3e3;transform-origin:0 50%;transform:scaleX(1.0122)">handler.php</div></div>
<div class="row" style="top:470px;background:#1f1f1f"><svg class="abs" style="left:4.500px;top:3px" width="15" height="14" viewBox="-8 -7.500 16 15" fill="none" stroke="#e9935a" stroke-width="1.550" stroke-linecap="round" stroke-linejoin="round"><g transform="scale(.95,.82)"><path d="M-2.800-5.300h-1a1.600 1.600 0 0 0-1.600 1.600v1.500c0 1.100-.7 1.700-1.500 2.200.8.500 1.500 1.100 1.500 2.200v1.500a1.600 1.600 0 0 0 1.600 1.600h1"/><path d="M2.800-5.300h1a1.600 1.600 0 0 1 1.600 1.600v1.500c0 1.100.7 1.700 1.500 2.200-.8.500-1.500 1.100-1.500 2.200v1.500a1.600 1.600 0 0 1-1.600 1.600h-1"/><path d="M0-2.600v.2M0 .5v2.200" stroke-width="1.900"/></g></svg><div class="t" id="r11" style="color:#e3e3e3;transform-origin:0 50%;transform:scaleX(1.0122)">handler.php</div></div>
<div class="row" style="top:491px;background:#292a2d"><svg class="abs" style="left:4.500px;top:3px" width="15" height="14" viewBox="-8 -7.500 16 15" fill="none" stroke="#e9935a" stroke-width="1.550" stroke-linecap="round" stroke-linejoin="round"><g transform="scale(.95,.82)"><path d="M-2.800-5.300h-1a1.600 1.600 0 0 0-1.600 1.600v1.500c0 1.100-.7 1.700-1.500 2.200.8.500 1.500 1.100 1.500 2.200v1.500a1.600 1.600 0 0 0 1.600 1.600h1"/><path d="M2.800-5.300h1a1.600 1.600 0 0 1 1.600 1.600v1.500c0 1.100.7 1.700 1.500 2.200-.8.500-1.500 1.100-1.500 2.200v1.500a1.600 1.600 0 0 1-1.600 1.600h-1"/><path d="M0-2.600v.2M0 .5v2.200" stroke-width="1.900"/></g></svg><div class="t" id="r12" style="color:#e3e3e3;transform-origin:0 50%;transform:scaleX(1.0122)">handler.php</div></div>
<div class="row" style="top:512px;background:#1f1f1f"><svg class="abs" style="left:4.500px;top:3px" width="15" height="14" viewBox="-8 -7.500 16 15" fill="none" stroke="#e9935a" stroke-width="1.550" stroke-linecap="round" stroke-linejoin="round"><g transform="scale(.95,.82)"><path d="M-2.800-5.300h-1a1.600 1.600 0 0 0-1.600 1.600v1.500c0 1.100-.7 1.700-1.500 2.200.8.500 1.500 1.100 1.500 2.200v1.500a1.600 1.600 0 0 0 1.600 1.600h1"/><path d="M2.800-5.300h1a1.600 1.600 0 0 1 1.600 1.600v1.500c0 1.100.7 1.700 1.500 2.200-.8.500-1.500 1.100-1.500 2.200v1.500a1.600 1.600 0 0 1-1.600 1.600h-1"/><path d="M0-2.600v.2M0 .5v2.200" stroke-width="1.900"/></g></svg><div class="t" id="r13" style="color:#e3e3e3;transform-origin:0 50%;transform:scaleX(1.0122)">handler.php</div></div>
<div class="row" style="top:533px;background:#292a2d"><svg class="abs" style="left:4.500px;top:3px" width="15" height="14" viewBox="-8 -7.500 16 15" fill="none" stroke="#e9935a" stroke-width="1.550" stroke-linecap="round" stroke-linejoin="round"><g transform="scale(.95,.82)"><path d="M-2.800-5.300h-1a1.600 1.600 0 0 0-1.600 1.600v1.500c0 1.100-.7 1.700-1.500 2.200.8.500 1.500 1.100 1.500 2.200v1.500a1.600 1.600 0 0 0 1.600 1.600h1"/><path d="M2.800-5.300h1a1.600 1.600 0 0 1 1.600 1.600v1.500c0 1.100.7 1.700 1.500 2.200-.8.500-1.500 1.100-1.500 2.200v1.500a1.600 1.600 0 0 1-1.600 1.600h-1"/><path d="M0-2.600v.2M0 .5v2.200" stroke-width="1.900"/></g></svg><div class="t" id="r14" style="color:#e3e3e3;transform-origin:0 50%;transform:scaleX(1.0122)">handler.php</div></div>
<div class="abs" style="left:199px;top:212px;width:1px;height:517px;background:#474747"></div>
<div class="abs" style="left:200px;top:212px;width:354px;height:26px;background:#3c3c3c"></div>
<div class="abs" style="left:200px;top:238px;width:354px;height:1px;background:#4a4a4a"></div>
<div class="t" id="d_he" style="left:246.3px;top:218.2px;color:#d6d6d6;transform-origin:0 50%;transform:scaleX(0.948);">Headers</div>
<div class="t" id="d_pa" style="left:309.3px;top:218.2px;color:#7cacf8;transform-origin:0 50%;transform:scaleX(0.9452);">Payload</div>
<div class="t" id="d_pr" style="left:370.2px;top:218.2px;color:#d6d6d6;transform-origin:0 50%;transform:scaleX(0.9605);">Preview</div>
<div class="t" id="d_re" style="left:430.3px;top:218.2px;color:#d6d6d6;transform-origin:0 50%;transform:scaleX(0.9344);">Response</div>
<div class="abs" style="left:299.3px;top:237px;width:61px;height:2px;background:#7cacf8"></div>
<div class="t" id="d_rp" style="left:217.8px;top:247.1px;color:#e8e8e8;transform-origin:0 50%;transform:scaleX(0.9565);font-weight:700;">Request Payload</div>
<div class="t" id="d_vs" style="left:346.4px;top:247.1px;color:#d6d6d6;transform-origin:0 50%;transform:scaleX(0.9707);">view source</div>
<div class="t mono" id="d_j0" style="left:232.2px;top:270.0px;color:#e3e3e3;transform-origin:0 50%;transform:scaleX(0.9103);">{adquestion: "didn't get that...",…}</div>
<div class="t mono" id="d_j1" style="left:235.8px;top:288.4px;transform-origin:0 50%;transform:scaleX(0.9134)"><span style="color:#86acf0">adquestion</span><span style="color:#d0d0d0">: </span><span style="color:#6ec6ef">"didn't get that..."</span></div>
<div class="t mono" id="d_j2" style="left:235.8px;top:305.4px;transform-origin:0 50%;transform:scaleX(0.8976)"><span style="color:#86acf0">prquestion</span><span style="color:#d0d0d0">: </span><span style="color:#6ec6ef">"\"Anyhow\" is an informal word that is used</span></div>
<div class="abs" style="left:200px;top:326px;width:354px;height:1px;background:#474747"></div>
<div class="abs" style="left:0;top:702.5px;width:199px;height:1px;background:#474747"></div>
<div class="t" id="d_rq" style="left:10.6px;top:709.4px;color:#d6d6d6;transform-origin:0 50%;transform:scaleX(0.9726);">15 requests</div>
<div class="t" id="d_tr" style="left:90.2px;top:709.4px;color:#d6d6d6;transform-origin:0 50%;transform:scaleX(0.9749);">3.2 kB transferred</div>
<div class="vs" style="left:80.5px;top:710px;height:14px"></div>
<div class="vs" style="left:192.5px;top:710px;height:14px"></div>
<div class="abs" style="left:200px;top:713px;width:354px;height:16px;background:#2c2c2c"></div>
<div class="abs" style="left:217.5px;top:713px;width:47.500px;height:16px;background:#4e4e4e"></div>
<svg class="abs" style="left:0;top:0" width="554" height="729" viewBox="982 87 554 729" fill="none" stroke-linecap="round" stroke-linejoin="round">
<g transform="translate(0,-1.2)"><path d="M991.500 99.500v-2.200M991.500 104.500v-1.500M991.500 108v-1M993 95.500h1.500M996.500 95.500h1.500M1000 95.500h1.500M1003.500 95.500h1M1004.500 97v1.500M993 108.500h1.500" stroke="#c7c7c7" stroke-width="1.400" stroke-linecap="butt"/><path d="M991.500 95.500h.01M991.500 108.500h.01M1004.500 95.500h.01" stroke="#c7c7c7" stroke-width="1.400"/><path d="M997.700 101.700h5.800M997.700 101.700v5.800M997.700 101.700l7 7" stroke="#c7c7c7" stroke-width="1.500"/>
<path d="M1022 96h11.500M1022 96v9.500M1018.700 106.800h9.300" stroke="#c7c7c7" stroke-width="1.500"/><rect x="1029.700" y="99.300" width="4.600" height="7.600" rx=".8" stroke="#c7c7c7" stroke-width="1.400"/></g>
<path d="M1045.500 94.500v13" stroke="#5a5a5a" stroke-width="1"/>
<path d="M1328 97.500l3.800 3.800-3.800 3.800M1333.700 97.500l3.800 3.800-3.800 3.800" stroke="#c7c7c7" stroke-width="1.300"/>
<circle cx="1385.400" cy="101.300" r="6" fill="#e46962" stroke="none"/><path d="M1383 98.900l4.800 4.800M1387.800 98.900l-4.800 4.800" stroke="#3a1512" stroke-width="1.200"/>
<path d="M1414.500 96.700h9.300v7.200h-7l-2.300 2.300z" fill="#7cacf8" stroke="#7cacf8" stroke-width="1"/><path d="M1416.500 99.300h5.500M1416.500 101.500h5.500" stroke="#282828" stroke-width="1"/>
<path d="M1446 94.500v13" stroke="#5a5a5a" stroke-width="1"/>
<path d="M1471.56 100.58L1471.56 102.02L1469.56 102.90L1469.15 103.89L1469.94 105.93L1468.93 106.94L1466.89 106.15L1465.90 106.56L1465.02 108.56L1463.58 108.56L1462.70 106.56L1461.71 106.15L1459.67 106.94L1458.66 105.93L1459.45 103.89L1459.04 102.90L1457.04 102.02L1457.04 100.58L1459.04 99.70L1459.45 98.71L1458.66 96.67L1459.67 95.66L1461.71 96.45L1462.70 96.04L1463.58 94.04L1465.02 94.04L1465.90 96.04L1466.89 96.45L1468.93 95.66L1469.94 96.67L1469.15 98.71L1469.56 99.70z" stroke="#c7c7c7" stroke-width="1.400"/><circle cx="1464.3" cy="101.3" r="2.300" stroke="#c7c7c7" stroke-width="1.400"/>
<g fill="#c7c7c7" stroke="none"><circle cx="1492.400" cy="96.200" r="1.500"/><circle cx="1492.400" cy="101.300" r="1.500"/><circle cx="1492.400" cy="106.400" r="1.500"/></g>
<path d="M1514 96.800l9 9M1523 96.800l-9 9" stroke="#c7c7c7" stroke-width="1.400"/>
<circle cx="998" cy="127.700" r="6.700" stroke="#e46962" stroke-width="1.500"/><rect x="994.700" y="124.400" width="6.600" height="6.600" rx="1" fill="#e46962" stroke="none"/>
<circle cx="1026" cy="127.700" r="6.700" stroke="#c7c7c7" stroke-width="1.500"/><path d="M1021.300 132.400l9.400-9.400" stroke="#c7c7c7" stroke-width="1.500"/>
<path d="M1045.500 120.500v14" stroke="#5a5a5a" stroke-width="1"/>
<path d="M1057 122h12l-4.700 6v6h-2.600v-6z" fill="#7cacf8" stroke="#7cacf8" stroke-width=".8"/>
<circle cx="1089.300" cy="125.800" r="4" stroke="#c7c7c7" stroke-width="1.500"/><path d="M1092.300 128.800l4.700 4.700" stroke="#c7c7c7" stroke-width="1.600"/>
<path d="M1110.500 120.500v14" stroke="#5a5a5a" stroke-width="1"/>
<path d="M1213.500 120.500v14" stroke="#5a5a5a" stroke-width="1"/>
<path d="M1408.200 125.300h8.200l-4.100 5.200z" fill="#c7c7c7" stroke="none"/>
<path d="M1437 124.500a11 11 0 0 1 15.500 0M1439.700 127.500a7.200 7.200 0 0 1 10.200 0M1442.300 130.500a3.400 3.400 0 0 1 3.300-.8" stroke="#c7c7c7" stroke-width="1.500"/><circle cx="1449.500" cy="132.200" r="1.900" stroke="#c7c7c7" stroke-width="1.300"/><path d="M1449.500 129.300v.7M1449.500 134.400v.7M1446.600 132.200h.7M1451.700 132.200h.7" stroke="#c7c7c7" stroke-width="1.200"/><path d="M1444.700 133.500l-1.200-1.300h1.800z" fill="#c7c7c7" stroke="#c7c7c7" stroke-width=".8"/>
<path d="M1463 120.500v14" stroke="#5a5a5a" stroke-width="1"/><path d="M1500 120.500v14" stroke="#5a5a5a" stroke-width="1"/>
<path d="M1525.76 126.98L1525.76 128.42L1523.76 129.30L1523.35 130.29L1524.14 132.33L1523.13 133.34L1521.09 132.55L1520.10 132.96L1519.22 134.96L1517.78 134.96L1516.90 132.96L1515.91 132.55L1513.87 133.34L1512.86 132.33L1513.65 130.29L1513.24 129.30L1511.24 128.42L1511.24 126.98L1513.24 126.10L1513.65 125.11L1512.86 123.07L1513.87 122.06L1515.91 122.85L1516.90 122.44L1517.78 120.44L1519.22 120.44L1520.10 122.44L1521.09 122.85L1523.13 122.06L1524.14 123.07L1523.35 125.11L1523.76 126.10z" stroke="#c7c7c7" stroke-width="1.400"/><circle cx="1518.5" cy="127.7" r="2.300" stroke="#c7c7c7" stroke-width="1.400"/>
<path d="M998 157.500v-9.500M994.300 151.300l3.700-3.700 3.700 3.700M992.500 156.500v3h11v-3" stroke="#c7c7c7" stroke-width="1.500"/>
<path d="M1026 147.500v9.500M1022.300 153.500l3.700 3.700 3.700-3.700M1020.500 156.500v3h11v-3" stroke="#c7c7c7" stroke-width="1.500"/>
<path d="M998.500 176.500h9l-3.500 4.300v4.500h-2v-4.500z" stroke="#c7c7c7" stroke-width="1.300"/>
<path d="M1248.800 174v13" stroke="#5a5a5a" stroke-width="1"/>
<path d="M1326.500 178.200h8.200l-4.100 5.200z" fill="#c7c7c7" stroke="none"/>
<path d="M1197.500 308.200l9 9M1206.500 308.200l-9 9" stroke="#c7c7c7" stroke-width="1.400"/>
<path d="M1477 309l3.800 3.800-3.800 3.800M1482.700 309l3.800 3.800-3.800 3.800" stroke="#c7c7c7" stroke-width="1.300"/>
<path d="M1191 338.700h7.400l-3.700 5.600z" fill="#e3e3e3" stroke="none"/>
<path d="M1200.300 361.600h8l-4 6z" fill="#c7c7c7" stroke="none"/>
<path d="M1194 803.500v9l-5.500-4.500z" fill="#5e5e5e" stroke="none"/><path d="M1524.500 803.500v9l5.500-4.500z" fill="#e3e3e3" stroke="none"/>
</svg>
</div>
</div>
</body>
</html>
